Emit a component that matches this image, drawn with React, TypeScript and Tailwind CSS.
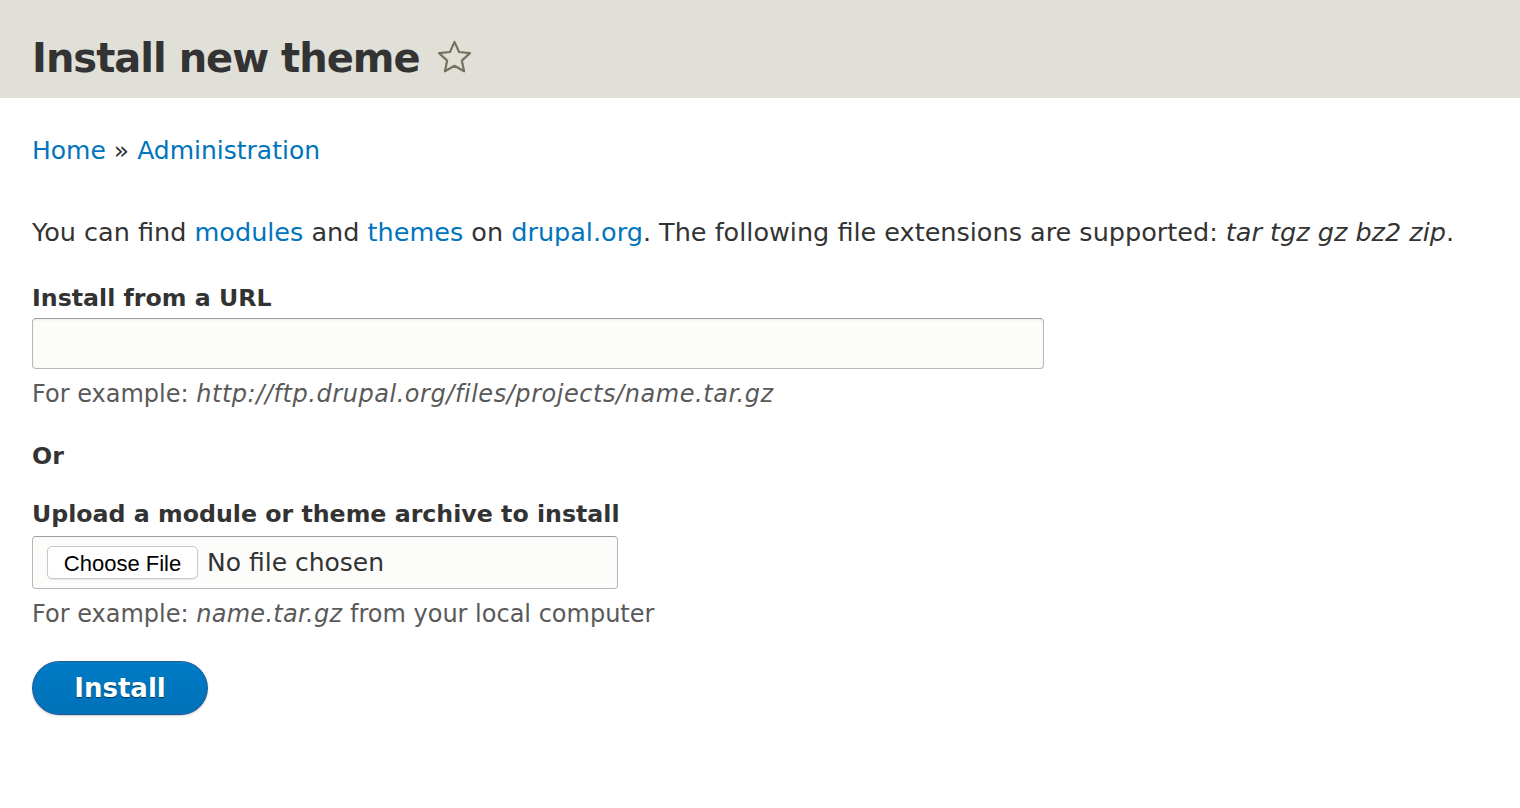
import React from 'react';

// Drupal "Seven" admin page: Install new theme

function StarIcon() {
  return (
    <svg width="39" height="39" viewBox="0 0 24 24" fill="none" stroke="#75735f" strokeWidth="1.35" strokeLinejoin="round">
      <path d="M12 2.4l2.8 6.2 6.7.7-5 4.6 1.4 6.6L12 17.1l-5.9 3.4 1.4-6.6-5-4.6 6.7-.7z" />
    </svg>
  );
}

function Description({ children }: { children: React.ReactNode }) {
  return <div className="mt-[11px] text-[24px] leading-[28px] text-[#595959]">{children}</div>;
}

function Label({ children }: { children: React.ReactNode }) {
  return <div className="text-[23.7px] leading-[30px] font-bold text-[#333]">{children}</div>;
}

export default function App() {
  return (
    <div className="min-h-[808px] bg-white text-[#333] font-['DejaVu_Sans',sans-serif]">
      <header className="h-[98px] bg-[#e0e0d8] px-[32px] flex items-center pt-[18px]">
        <h1 className="text-[40px] font-bold leading-none text-[#333] tracking-[-1px]">Install new theme</h1>
        <span className="ml-[15px] mt-[-2px]">
          <StarIcon />
        </span>
      </header>

      <main className="px-[32px]">
        <nav className="mt-[38px] text-[25px] leading-[30px]">
          <a className="text-[#0074bd]" href="#">Home</a>
          <span className="mx-[8px]">»</span>
          <a className="text-[#0074bd]" href="#">Administration</a>
        </nav>

        <p className="mt-[51px] text-[25.5px] leading-[30px]">
          You can find <a className="text-[#0074bd]" href="#">modules</a> and{' '}
          <a className="text-[#0074bd]" href="#">themes</a> on{' '}
          <a className="text-[#0074bd]" href="#">drupal.org</a>. The following file extensions are supported:{' '}
          <em>tar tgz gz bz2 zip</em>.
        </p>

        <section className="mt-[36px]">
          <Label>Install from a URL</Label>
          <div className="mt-[5px] h-[51px] w-[1012px] rounded-[4px] border border-[#b8b8b8] border-t-[#a0a0a0] bg-[#fcfcfa] shadow-[inset_0_1px_2px_rgba(0,0,0,0.08)]" />
          <Description>
            For example: <em className="tracking-[0.55px]">http://ftp.drupal.org/files/projects/name.tar.gz</em>
          </Description>
        </section>

        <div className="mt-[33px]">
          <Label>Or</Label>
        </div>

        <section className="mt-[28px]">
          <Label>Upload a module or theme archive to install</Label>
          <div className="mt-[7px] h-[53px] w-[586px] rounded-[4px] border border-[#b8b8b8] border-t-[#a0a0a0] bg-[#fcfcfa] flex items-center px-[14px]">
            <button className="h-[33px] w-[151px] rounded-[5px] border border-[#c8c8c8] bg-white text-[22px] text-black font-['Liberation_Sans',sans-serif] shadow-[0_1px_1px_rgba(0,0,0,0.08)]">
              Choose File
            </button>
            <span className="ml-[9px] text-[25px] text-[#333]">No file chosen</span>
          </div>
          <Description>
            For example: <em className="tracking-[0.3px]">name.tar.gz</em> from your local computer
          </Description>
        </section>

        <button className="mt-[33px] h-[54px] w-[176px] rounded-full border border-[#1e5c90] bg-gradient-to-b from-[#007bc6] to-[#0071b8] text-white text-[26px] font-bold [text-shadow:0_1px_1px_rgba(0,0,0,0.5)] shadow-[0_1px_2px_rgba(0,0,0,0.2)]">
          Install
        </button>
      </main>
    </div>
  );
}
